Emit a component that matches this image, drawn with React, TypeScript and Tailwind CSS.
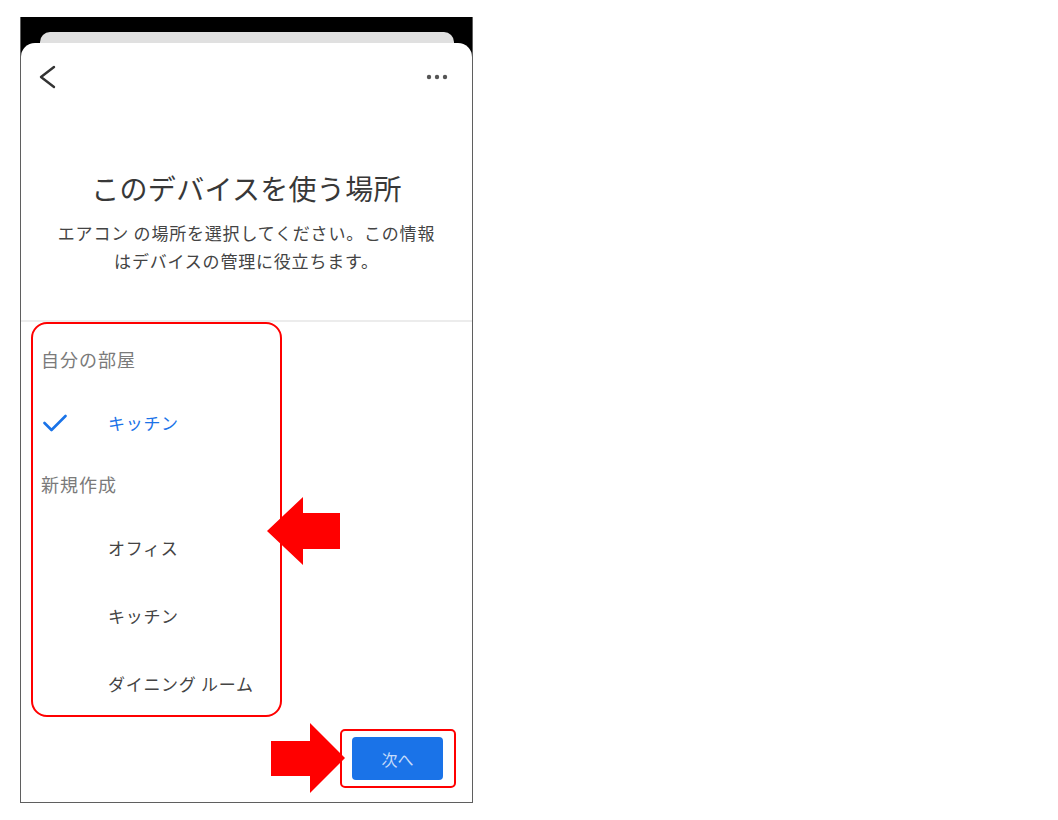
import React from "react";

const jp = { fontFamily: '"Noto Sans CJK JP", "Noto Sans", sans-serif' };

function BackChevron() {
  return (
    <svg width="18" height="24" viewBox="0 0 18 24" fill="none">
      <path d="M16 2 L3 12 L16 22" stroke="#333" strokeWidth="2.4" strokeLinecap="round" strokeLinejoin="round" />
    </svg>
  );
}

function MoreDots() {
  return (
    <svg width="22" height="6" viewBox="0 0 22 6">
      <circle cx="3" cy="3" r="2.2" fill="#555" />
      <circle cx="11" cy="3" r="2.2" fill="#555" />
      <circle cx="19" cy="3" r="2.2" fill="#555" />
    </svg>
  );
}

function CheckMark() {
  return (
    <svg width="24" height="18" viewBox="0 0 24 18" fill="none">
      <path d="M1.5 9 L8.5 16 L22.5 2" stroke="#1a73e8" strokeWidth="2.6" strokeLinecap="round" strokeLinejoin="round" />
    </svg>
  );
}

function SectionHeading({ label, h }: { label: string; h: string }) {
  return (
    <div className={`flex items-center pl-[8px] text-[18px] tracking-[1px] text-[#7a7a7a] ${h}`}>{label}</div>
  );
}

function RoomRow({ label, h }: { label: string; h: string }) {
  return (
    <div className={`flex items-center pl-[75px] text-[17px] tracking-[0.7px] text-[#444] ${h}`}>{label}</div>
  );
}

export default function App() {
  return (
    <div className="relative w-[1058px] h-[820px] bg-white pt-[17px] pl-[20px]" style={jp}>
      {/* phone frame */}
      <div className="w-[453px] bg-black border-x border-b border-[#5f5f5f] pt-[15px]">
        <div className="ml-[19px] mr-[18px] h-[11px] rounded-t-[10px] bg-[#e0e0e0]" />
        <div className="h-[759px] bg-white rounded-t-[14px] flex flex-col">
          <div className="h-[68px] flex items-center justify-between pl-[17px] pr-[24px]">
            <BackChevron />
            <MoreDots />
          </div>

          <h1 className="mt-[59px] text-center text-[28px] leading-[36px] tracking-[0.3px] text-[#383838] font-normal">
            このデバイスを使う場所
          </h1>
          <p className="mt-[13px] text-center text-[17px] leading-[28px] tracking-[0.8px] text-[#444]">
            エアコン の場所を選択してください。この情報
            <br />
            はデバイスの管理に役立ちます。
          </p>

          <div className="mt-[45px] h-[2px] bg-[#ececec]" />

          {/* room list */}
          <div className="ml-[10px] w-[251px] h-[395px] border-2 border-[#ff0000] rounded-[16px] flex flex-col">
            <SectionHeading label="自分の部屋" h="h-[70px]" />
            <div className="h-[57px] flex items-center pl-[10px]">
              <CheckMark />
              <span className="ml-[41px] text-[17px] tracking-[0.7px] text-[#1a73e8]">キッチン</span>
            </div>
            <SectionHeading label="新規作成" h="h-[66px]" />
            <RoomRow label="オフィス" h="h-[62px]" />
            <RoomRow label="キッチン" h="h-[73px]" />
            <RoomRow label="ダイニング ルーム" h="h-[63px]" />
          </div>

          <div className="mt-[12px] flex justify-end pr-[16px]">
            <div className="border-2 border-[#ff0000] rounded-[5px] pl-[10px] pr-[11px] py-[6px]">
              <button className="w-[91px] h-[43px] rounded-[4px] bg-[#1a73e8] text-[16px] text-[#c6dcfa] flex items-center justify-center">
                次へ
              </button>
            </div>
          </div>
        </div>
      </div>

      {/* callout arrows */}
      <svg className="absolute left-[266px] top-[496px]" width="76" height="71" viewBox="0 0 76 71">
        <polygon points="1,35 37,1 37,17 74,17 74,53 37,53 37,69" fill="#ff0000" />
      </svg>
      <svg className="absolute left-[270px] top-[722px]" width="77" height="73" viewBox="0 0 77 73">
        <polygon points="1,19 40,19 40,1 75,36 40,71 40,54 1,54" fill="#ff0000" />
      </svg>
    </div>
  );
}
